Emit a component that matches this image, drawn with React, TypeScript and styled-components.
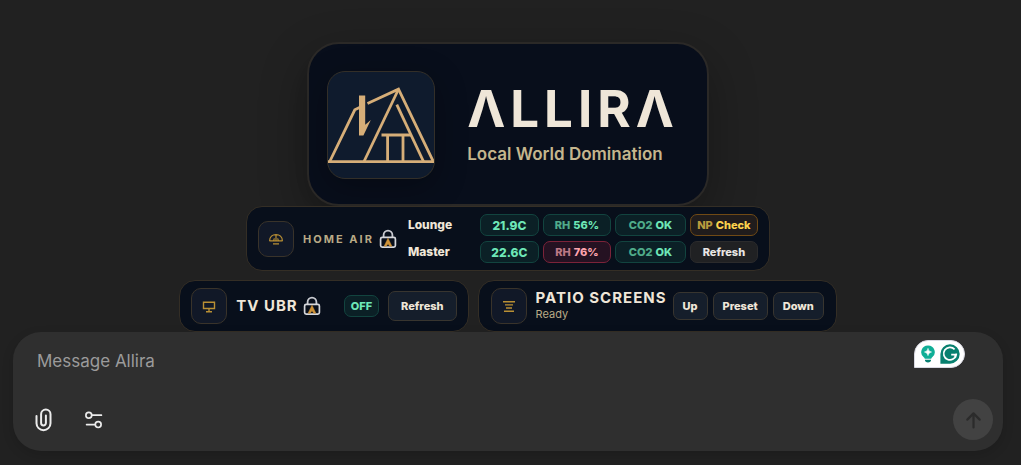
import React from "react";
import styled, { createGlobalStyle, css } from "styled-components";

const GlobalStyle = createGlobalStyle`
  *, *::before, *::after { box-sizing: border-box; }
  body {
    margin: 0;
    background: #212121;
    color: #efe6d8;
    font-family: Inter, "Liberation Sans", sans-serif;
  }
  button, textarea { font-family: inherit; margin: 0; }
  h1, h2, p { margin: 0; }
  svg { display: block; flex: none; }
`;

const Page = styled.main`
  display: flex;
  flex-direction: column;
  align-items: center;
  min-height: 100vh;
  padding: 42px 18px 14px 13px;
`;

const Hero = styled.header`
  display: flex;
  align-items: center;
  gap: 32px;
  padding: 27px 28px 25px 18px;
  border: 2px solid #2b2927;
  border-radius: 32px;
  background: #080e1b;
  box-shadow: 0 16px 48px rgba(0, 0, 0, 0.3);
`;

const LogoTile = styled.div`
  width: 108px;
  height: 108px;
  border: 1px solid #332f28;
  border-radius: 18px;
  background: #0f1b2d;
  box-shadow: 0 8px 32px rgba(0, 0, 0, 0.3);
`;

const Brand = styled.h1`
  font-size: 51px;
  line-height: 52px;
  font-weight: 700;
  letter-spacing: 5px;
  color: #efe6d8;
`;

const Tagline = styled.p`
  margin-top: 7px;
  padding-bottom: 1px;
  font-size: 17px;
  line-height: 24px;
  font-weight: 600;
  color: #c5b68d;
`;

const Card = styled.section<{ $inset: number }>`
  display: flex;
  align-items: center;
  padding: 7px ${(p) => p.$inset}px;
  border: 1px solid #342e25;
  border-radius: 16px;
  background: #080f1b;
`;

const CardRow = styled.div`
  display: flex;
  flex-wrap: wrap;
  justify-content: center;
  gap: 9px;
  margin-top: 9px;
`;

const IconTile = styled.div`
  display: grid;
  place-items: center;
  flex: none;
  width: 36px;
  height: 36px;
  margin-right: 9px;
  border: 1px solid #39332a;
  border-radius: 10px;
  background: #111827;
  color: #b98f34;
`;

const AirTitle = styled.h2`
  margin-right: 5px;
  font-size: 11px;
  line-height: 16px;
  font-weight: 700;
  letter-spacing: 2px;
  color: #b9aa86;
`;

const DeviceTitle = styled.h2`
  font-size: 15px;
  line-height: 18px;
  font-weight: 700;
  letter-spacing: 1px;
  color: #efe6d8;
`;

const DeviceText = styled.div`
  margin: -2px 6px 0 0;
`;

const Status = styled.p`
  font-size: 11px;
  line-height: 14px;
  color: #b9aa86;
`;

const AirTable = styled.div`
  display: grid;
  grid-template-columns: 68px 59px 68px 71px 68px;
  column-gap: 4px;
  row-gap: 5px;
  margin-left: 11px;
`;

const Room = styled.span`
  font-size: 12px;
  line-height: 22px;
  font-weight: 800;
`;

const tones = {
  good: css`
    color: #6ee7b7;
    background: #0b2026;
    border-color: #12443f;
  `,
  bad: css`
    color: #fda4af;
    background: #251222;
    border-color: #7c2339;
  `,
  warn: css`
    color: #fcd34d;
    background: #201c1c;
    border-color: #704a15;
  `,
};

const Pill = styled.span<{ $tone: keyof typeof tones; $large?: boolean }>`
  display: flex;
  align-items: center;
  justify-content: center;
  gap: 3px;
  height: 22px;
  padding: 0 6px;
  border: 1px solid;
  border-radius: 7px;
  font-size: ${(p) => (p.$large ? 12 : 11)}px;
  font-weight: 800;
  white-space: nowrap;
  ${(p) => tones[p.$tone]}
`;

const Dim = styled.span`
  opacity: 0.7;
`;

const SmallRefresh = styled.button`
  height: 22px;
  padding: 0;
  border: 1px solid #2b2b2c;
  border-radius: 7px;
  background: #202123;
  color: #e8e6e3;
  font-size: 11px;
  font-weight: 800;
`;

const Button = styled.button<{ $tall?: boolean }>`
  height: ${(p) => (p.$tall ? 30 : 28)}px;
  padding: 0 ${(p) => (p.$tall ? 12 : 9)}px;
  border: 1px solid #38352f;
  border-radius: 7px;
  background: #151e2b;
  color: #efe6d8;
  font-size: 11px;
  font-weight: 800;
`;

const ButtonGroup = styled.div`
  display: flex;
  gap: 5px;
`;

const TitleGroup = styled.div`
  display: flex;
  align-items: center;
  gap: 5px;
`;

const StateGroup = styled.div`
  display: flex;
  align-items: center;
  gap: 9px;
  margin-left: 23px;
`;

const Composer = styled.form`
  position: relative;
  display: flex;
  flex-direction: column;
  justify-content: space-between;
  align-self: stretch;
  height: 119px;
  padding: 17px 10px 11px 13px;
  border-radius: 28px;
  background: #2f2f2f;
  box-shadow: 0 4px 12px rgba(0, 0, 0, 0.14);
`;

const MessageBox = styled.textarea`
  display: block;
  width: 100%;
  height: 24px;
  padding: 0 96px 0 11px;
  border: 0;
  outline: 0;
  resize: none;
  overflow: hidden;
  background: transparent;
  color: #ececec;
  font-size: 17px;
  line-height: 24px;
  &::placeholder { color: #9b9b9b; opacity: 1; }
`;

const Tools = styled.div`
  display: flex;
  align-items: center;
  gap: 14px;
`;

const ToolButton = styled.button`
  display: grid;
  place-items: center;
  width: 36px;
  height: 36px;
  padding: 0;
  border: 0;
  background: none;
  color: #ececec;
`;

const SendButton = styled.button`
  display: grid;
  place-items: center;
  width: 40px;
  height: 41px;
  margin-left: auto;
  padding: 0;
  border: 0;
  border-radius: 50%;
  background: #424242;
  color: #2b2b2b;
`;

const Assistant = styled.div`
  position: absolute;
  top: 8px;
  right: 38px;
  display: flex;
  align-items: center;
  gap: 5px;
  height: 28px;
  padding: 0 4px 0 6px;
  border: 1px solid #d9d9e2;
  border-radius: 14px 14px 14px 0;
  background: #ffffff;
`;

const HouseLogo = () => (
  <svg width="106" height="106" viewBox="1 1 106 106" fill="none" stroke="#d6ae78" strokeWidth="2.8" aria-hidden="true">
    <path d="M1 90.7H107" />
    <path d="M3 90 27.8 38.8 33 36.2" />
    <path d="M32 24.5h6.2v29.2l5.6-4.6-7.4 15.4H32z" fill="#d6ae78" stroke="none" />
    <path d="M40.5 32.6 71.5 18.2 106 90" />
    <path d="M71.4 18.5 37 90.5" />
    <path d="M69.8 33.6 96.5 90.5" />
    <path d="M54.5 64H84M60.6 64v26.5M76 64v26.5" />
  </svg>
);

const LockIcon = () => (
  <svg width="18" height="20" viewBox="0 0 18 20" fill="none" aria-hidden="true">
    <path d="M4.600 8.500V6a4.400 4.400 0 0 1 8.800 0v2.500" stroke="#c8cad0" strokeWidth="1.800" />
    <rect x="1.600" y="8.400" width="14.800" height="9.800" rx="1.600" stroke="#d5d7dc" strokeWidth="1.700" />
    <path d="M9 9.200 12.900 17.200H10.700L9 14.800 7.300 17.200H5.100z" fill="#cf9338" stroke="#cf9338" strokeWidth=".5" />
  </svg>
);

const AirIcon = () => (
  <svg width="14" height="14" viewBox="0 0 14 14" fill="none" stroke="currentColor" strokeWidth="1.200" aria-hidden="true">
    <path d="M.6 9C.6 5 3.400 2.600 7 2.600s6.400 2.400 6.400 6.400M.4 8.900h13.200M7 2.600v6.300M4.500 8.900l.9-2.500M9.500 8.900l-.9-2.500M4 11.900h6" />
  </svg>
);

const TvIcon = () => (
  <svg width="14" height="14" viewBox="0 0 14 14" fill="none" stroke="currentColor" strokeWidth="1.400" aria-hidden="true">
    <path d="M1.500 3.200h11v6.300h-11zM7 9.500v3M4 12.800h6" />
  </svg>
);

const ScreensIcon = () => (
  <svg width="14" height="14" viewBox="0 0 14 14" fill="none" stroke="currentColor" strokeWidth="1.400" aria-hidden="true">
    <path d="M1 2.800h12M3 5.900h8M4 9h6M2 12.200h10" />
  </svg>
);

const ClipIcon = () => (
  <svg width="18" height="24" viewBox="0 0 18 24" fill="none" stroke="currentColor" strokeWidth="2" strokeLinecap="round" aria-hidden="true">
    <path d="M1.500 8v7.200a7 7 0 0 0 14 0V6.200a4.700 4.700 0 0 0-9.400 0v8.800a2.400 2.400 0 0 0 4.800 0V7.400" />
  </svg>
);

const SlidersIcon = () => (
  <svg width="18" height="18" viewBox="0 0 18 18" fill="none" stroke="currentColor" strokeWidth="1.700" strokeLinecap="round" aria-hidden="true">
    <circle cx="3.800" cy="4.200" r="2.900" />
    <path d="M7 4.200h9.400M1.600 13.600h8.400" />
    <circle cx="13.200" cy="13.600" r="2.900" />
  </svg>
);

const ArrowUpIcon = () => (
  <svg width="18" height="18" viewBox="0 0 18 18" fill="none" stroke="currentColor" strokeWidth="2.200" strokeLinecap="round" strokeLinejoin="round" aria-hidden="true">
    <path d="M9.500 16.500V2.500M3.300 8.600 9.500 2.400l6.200 6.200" />
  </svg>
);

const BulbIcon = () => (
  <svg width="14" height="18" viewBox="0 0 14 18" aria-hidden="true">
    <path d="M7 .4a6.700 6.700 0 0 0-4 12.100c.5.4.7.8.7 1.300h6.600c0-.5.2-.9.7-1.300A6.700 6.700 0 0 0 7 .4z" fill="#0fae96" />
    <path d="M7 3.400c.5 2.200 1.300 3 3.500 3.600C8.300 7.600 7.500 8.400 7 10.600 6.500 8.400 5.700 7.600 3.500 7 5.700 6.400 6.500 5.600 7 3.400z" fill="#fff" stroke="#fff" strokeWidth=".6" />
    <path d="M3.900 14.800h6.200c0 1.700-1.300 2.600-3.100 2.600s-3.100-.9-3.100-2.600z" fill="#087f72" />
  </svg>
);

const WritingIcon = () => (
  <svg width="20" height="20" viewBox="0 0 20 20" fill="none" aria-hidden="true">
    <path d="M10 .3a9.700 9.700 0 1 1 0 19.400H.4V10A9.600 9.600 0 0 1 10 .3z" fill="#08806f" />
    <path d="M14.600 5.300A6.300 6.300 0 1 0 16.200 10.600H11.200M16.200 10.600V9.600" stroke="#fff" strokeWidth="1.700" />
    <path d="M16.400 10.300l-.2 3.400-2.600-1.600z" fill="#fff" />
  </svg>
);

const rooms: { name: string; temp: string; rh: string; rhTone: "good" | "bad" }[] = [
  { name: "Lounge", temp: "21.9C", rh: "56%", rhTone: "good" },
  { name: "Master", temp: "22.6C", rh: "76%", rhTone: "bad" },
];

export default function App() {
  return (
    <>
      <GlobalStyle />
      <Page>
        <Hero>
          <LogoTile><HouseLogo /></LogoTile>
          <div>
            <Brand>ΛLLIRΛ</Brand>
            <Tagline>Local World Domination</Tagline>
          </div>
        </Hero>

        <Card $inset={11}>
          <IconTile><AirIcon /></IconTile>
          <AirTitle>HOME AIR</AirTitle>
          <LockIcon />
          <AirTable>
            {rooms.map((room, i) => (
              <React.Fragment key={room.name}>
                <Room>{room.name}</Room>
                <Pill $tone="good" $large>{room.temp}</Pill>
                <Pill $tone={room.rhTone}><Dim>RH</Dim>{room.rh}</Pill>
                <Pill $tone="good"><Dim>CO2</Dim>OK</Pill>
                {i === 0 ? (
                  <Pill $tone="warn"><Dim>NP</Dim>Check</Pill>
                ) : (
                  <SmallRefresh type="button">Refresh</SmallRefresh>
                )}
              </React.Fragment>
            ))}
          </AirTable>
        </Card>

        <CardRow>
          <Card $inset={11}>
            <IconTile><TvIcon /></IconTile>
            <TitleGroup>
              <DeviceTitle>TV UBR</DeviceTitle>
              <LockIcon />
            </TitleGroup>
            <StateGroup>
              <Pill $tone="good">OFF</Pill>
              <Button type="button" $tall>Refresh</Button>
            </StateGroup>
          </Card>
          <Card $inset={12}>
            <IconTile><ScreensIcon /></IconTile>
            <DeviceText>
              <DeviceTitle>PATIO SCREENS</DeviceTitle>
              <Status>Ready</Status>
            </DeviceText>
            <ButtonGroup>
              <Button type="button">Up</Button>
              <Button type="button">Preset</Button>
              <Button type="button">Down</Button>
            </ButtonGroup>
          </Card>
        </CardRow>

        <Composer onSubmit={(e) => e.preventDefault()}>
          <MessageBox aria-label="Message Allira" placeholder="Message Allira" rows={1} />
          <Assistant><BulbIcon /><WritingIcon /></Assistant>
          <Tools>
            <ToolButton type="button" aria-label="Attach files"><ClipIcon /></ToolButton>
            <ToolButton type="button" aria-label="Tools"><SlidersIcon /></ToolButton>
            <SendButton type="submit" aria-label="Send message"><ArrowUpIcon /></SendButton>
          </Tools>
        </Composer>
      </Page>
    </>
  );
}
